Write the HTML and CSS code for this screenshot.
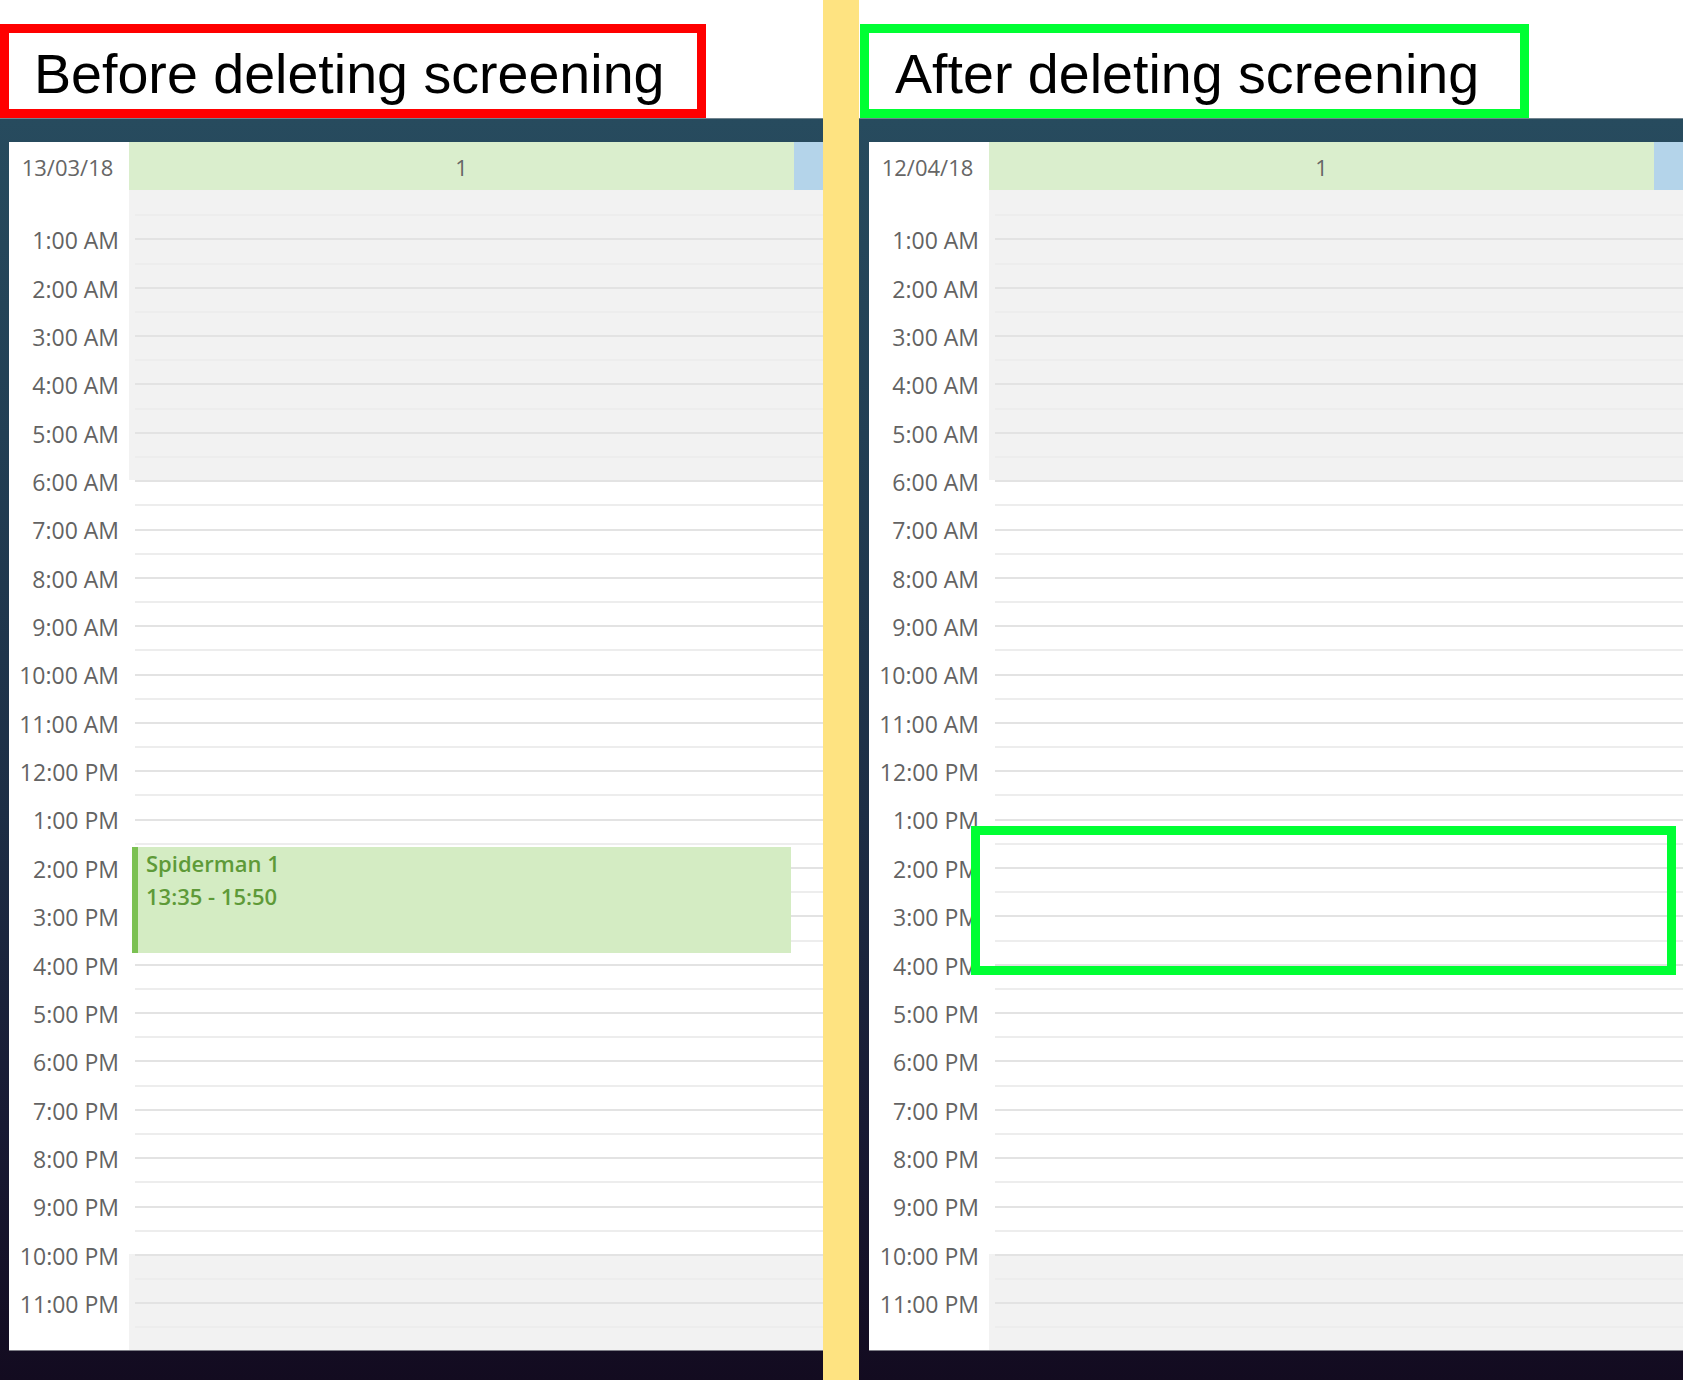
FILE: index.html
```html
<!DOCTYPE html>
<html lang="en">
<head>
<meta charset="utf-8">
<title>Before / after deleting screening</title>
<link rel="stylesheet" href="styles.css">
</head>
<body>
<div class="page">
  <section class="panel panel-before">
    <div class="label-area">
      <div class="label label-red">Before deleting screening</div>
    </div>
    <div class="frame">
      <div class="calendar">
        <div class="cal-head">
          <div class="date-cell">13/03/18</div>
          <div class="day-cell">1</div>
          <div class="blue-cell"></div>
        </div>
        <div class="cal-body">
          <div class="times">
            <div class="t-spacer"></div>
            <div class="tl">1:00 AM</div><div class="tl">2:00 AM</div><div class="tl">3:00 AM</div>
            <div class="tl">4:00 AM</div><div class="tl">5:00 AM</div><div class="tl">6:00 AM</div>
            <div class="tl">7:00 AM</div><div class="tl">8:00 AM</div><div class="tl">9:00 AM</div>
            <div class="tl">10:00 AM</div><div class="tl">11:00 AM</div><div class="tl">12:00 PM</div>
            <div class="tl">1:00 PM</div><div class="tl">2:00 PM</div><div class="tl">3:00 PM</div>
            <div class="tl">4:00 PM</div><div class="tl">5:00 PM</div><div class="tl">6:00 PM</div>
            <div class="tl">7:00 PM</div><div class="tl">8:00 PM</div><div class="tl">9:00 PM</div>
            <div class="tl">10:00 PM</div><div class="tl">11:00 PM</div>
          </div>
          <div class="slots">
            <div class="hr off first"><div class="half h1"></div><div class="half h2"></div></div>
            <div class="hr off"><div class="half h1"></div><div class="half h2"></div></div>
            <div class="hr off"><div class="half h1"></div><div class="half h2"></div></div>
            <div class="hr off"><div class="half h1"></div><div class="half h2"></div></div>
            <div class="hr off"><div class="half h1"></div><div class="half h2"></div></div>
            <div class="hr off"><div class="half h1"></div><div class="half h2"></div></div>
            <div class="hr"><div class="half h1"></div><div class="half h2"></div></div>
            <div class="hr"><div class="half h1"></div><div class="half h2"></div></div>
            <div class="hr"><div class="half h1"></div><div class="half h2"></div></div>
            <div class="hr"><div class="half h1"></div><div class="half h2"></div></div>
            <div class="hr"><div class="half h1"></div><div class="half h2"></div></div>
            <div class="hr"><div class="half h1"></div><div class="half h2"></div></div>
            <div class="hr"><div class="half h1"></div><div class="half h2"></div></div>
            <div class="hr"><div class="half h1"></div><div class="half h2"></div></div>
            <div class="hr"><div class="half h1"></div><div class="half h2"></div></div>
            <div class="hr"><div class="half h1"></div><div class="half h2"></div></div>
            <div class="hr"><div class="half h1"></div><div class="half h2"></div></div>
            <div class="hr"><div class="half h1"></div><div class="half h2"></div></div>
            <div class="hr"><div class="half h1"></div><div class="half h2"></div></div>
            <div class="hr"><div class="half h1"></div><div class="half h2"></div></div>
            <div class="hr"><div class="half h1"></div><div class="half h2"></div></div>
            <div class="hr"><div class="half h1"></div><div class="half h2"></div></div>
            <div class="hr off"><div class="half h1"></div><div class="half h2"></div></div>
            <div class="hr off"><div class="half h1"></div><div class="half h2"></div></div>
            <div class="event">
              <div class="ev-title">Spiderman 1</div>
              <div class="ev-time">13:35 - 15:50</div>
            </div>
          </div>
        </div>
      </div>
    </div>
  </section>

  <div class="divider"></div>

  <section class="panel panel-after">
    <div class="label-area">
      <div class="label label-green">After deleting screening</div>
    </div>
    <div class="frame frame-after">
      <div class="calendar">
        <div class="cal-head">
          <div class="date-cell">12/04/18</div>
          <div class="day-cell">1</div>
          <div class="blue-cell"></div>
        </div>
        <div class="cal-body">
          <div class="times">
            <div class="t-spacer"></div>
            <div class="tl">1:00 AM</div><div class="tl">2:00 AM</div><div class="tl">3:00 AM</div>
            <div class="tl">4:00 AM</div><div class="tl">5:00 AM</div><div class="tl">6:00 AM</div>
            <div class="tl">7:00 AM</div><div class="tl">8:00 AM</div><div class="tl">9:00 AM</div>
            <div class="tl">10:00 AM</div><div class="tl">11:00 AM</div><div class="tl">12:00 PM</div>
            <div class="tl">1:00 PM</div><div class="tl">2:00 PM</div><div class="tl">3:00 PM</div>
            <div class="tl">4:00 PM</div><div class="tl">5:00 PM</div><div class="tl">6:00 PM</div>
            <div class="tl">7:00 PM</div><div class="tl">8:00 PM</div><div class="tl">9:00 PM</div>
            <div class="tl">10:00 PM</div><div class="tl">11:00 PM</div>
          </div>
          <div class="slots">
            <div class="hr off first"><div class="half h1"></div><div class="half h2"></div></div>
            <div class="hr off"><div class="half h1"></div><div class="half h2"></div></div>
            <div class="hr off"><div class="half h1"></div><div class="half h2"></div></div>
            <div class="hr off"><div class="half h1"></div><div class="half h2"></div></div>
            <div class="hr off"><div class="half h1"></div><div class="half h2"></div></div>
            <div class="hr off"><div class="half h1"></div><div class="half h2"></div></div>
            <div class="hr"><div class="half h1"></div><div class="half h2"></div></div>
            <div class="hr"><div class="half h1"></div><div class="half h2"></div></div>
            <div class="hr"><div class="half h1"></div><div class="half h2"></div></div>
            <div class="hr"><div class="half h1"></div><div class="half h2"></div></div>
            <div class="hr"><div class="half h1"></div><div class="half h2"></div></div>
            <div class="hr"><div class="half h1"></div><div class="half h2"></div></div>
            <div class="hr"><div class="half h1"></div><div class="half h2"></div></div>
            <div class="hr"><div class="half h1"></div><div class="half h2"></div></div>
            <div class="hr"><div class="half h1"></div><div class="half h2"></div></div>
            <div class="hr"><div class="half h1"></div><div class="half h2"></div></div>
            <div class="hr"><div class="half h1"></div><div class="half h2"></div></div>
            <div class="hr"><div class="half h1"></div><div class="half h2"></div></div>
            <div class="hr"><div class="half h1"></div><div class="half h2"></div></div>
            <div class="hr"><div class="half h1"></div><div class="half h2"></div></div>
            <div class="hr"><div class="half h1"></div><div class="half h2"></div></div>
            <div class="hr"><div class="half h1"></div><div class="half h2"></div></div>
            <div class="hr off"><div class="half h1"></div><div class="half h2"></div></div>
            <div class="hr off"><div class="half h1"></div><div class="half h2"></div></div>
          </div>
        </div>
        <div class="highlight"></div>
      </div>
    </div>
  </section>
</div>
</body>
</html>
```

FILE: styles.css
```css
* {
  box-sizing: border-box;
}

html,
body {
  margin: 0;
  padding: 0;
}

body {
  width: 1683px;
  height: 1380px;
  overflow: hidden;
  background: #ffffff;
  font-family: "Open Sans", "Noto Sans", sans-serif;
}

.page {
  display: flex;
  height: 1380px;
}

.panel {
  display: flex;
  flex-direction: column;
  overflow: hidden;
  flex: none;
}

.panel-before {
  width: 823px;
}

.panel-after {
  width: 824px;
}

.divider {
  flex: none;
  width: 36px;
  background: #fee381;
}

/* ---------- annotation labels ---------- */
.label-area {
  flex: none;
  height: 118px;
  padding-top: 24px;
  background: #ffffff;
}

.label {
  height: 94px;
  border: 9px solid #000;
  padding-top: 6px;
  font-family: "Liberation Sans", Arial, sans-serif;
  font-size: 55.6px;
  line-height: 70px;
  color: #000000;
  white-space: nowrap;
  background: #ffffff;
}

.label-red {
  width: 706px;
  border-color: #ff0000;
  padding-left: 25px;
}

.label-green {
  width: 669px;
  margin-left: 1px;
  border-color: #00ff33;
  padding-left: 26px;
}

/* ---------- dark window frame ---------- */
.frame {
  flex: 1;
  border-top: 1px solid #71848f;
  padding: 23px 0 0 9px;
  background: linear-gradient(to bottom,
      #274b5e 0%,
      #223f54 25%,
      #1d2e45 55%,
      #181a33 80%,
      #130b20 100%);
}

.frame-after {
  padding-left: 10px;
}

/* ---------- calendar ---------- */
.calendar {
  position: relative;
  width: 814px;
  height: 1208px;
  overflow: hidden;
  background: #ffffff;
  box-shadow: 0 1px 0 #7d7d86;
}

.cal-head {
  display: flex;
  height: 48px;
  color: #666666;
  font-size: 22px;
}

.date-cell {
  flex: none;
  width: 120px;
  padding: 2px 3px 0 0;
  line-height: 46px;
  text-align: center;
  background: #ffffff;
}

.day-cell {
  flex: none;
  width: 665px;
  padding-top: 2px;
  line-height: 46px;
  text-align: center;
  background: #daeecd;
}

.blue-cell {
  flex: none;
  width: 29px;
  background: #b4d4ea;
}

.cal-body {
  display: flex;
}

.times {
  flex: none;
  width: 120px;
  background: #ffffff;
  color: #636363;
  font-size: 23px;
}

.t-spacer {
  height: 26.18px;
}

.tl {
  height: 48.36px;
  line-height: 48.36px;
  padding-right: 10px;
  text-align: right;
  white-space: nowrap;
}

.slots {
  position: relative;
  flex: 1;
}

.hr {
  height: 48.36px;
  background: #ffffff;
}

.hr.off {
  background: #f2f2f2;
}

.half {
  height: 50%;
  margin-left: 6px;
}

.h1 {
  border-top: 2px solid #e3e3e3;
}

.h2 {
  border-top: 2px solid #ededed;
}

.hr.first .h1 {
  border-top-color: transparent;
}

/* ---------- event ---------- */
.event {
  position: absolute;
  top: 657px;
  left: 3px;
  width: 659px;
  height: 106px;
  border-left: 6px solid #7bc152;
  background: #d4ecc3;
  padding: 0 0 0 8px;
  color: #5e9a38;
  font-size: 22px;
  font-weight: 600;
  line-height: 33px;
  white-space: nowrap;
}

/* ---------- annotation highlight ---------- */
.highlight {
  position: absolute;
  left: 102px;
  top: 684px;
  width: 705px;
  height: 149px;
  border: 9px solid #00ff33;
}
```
